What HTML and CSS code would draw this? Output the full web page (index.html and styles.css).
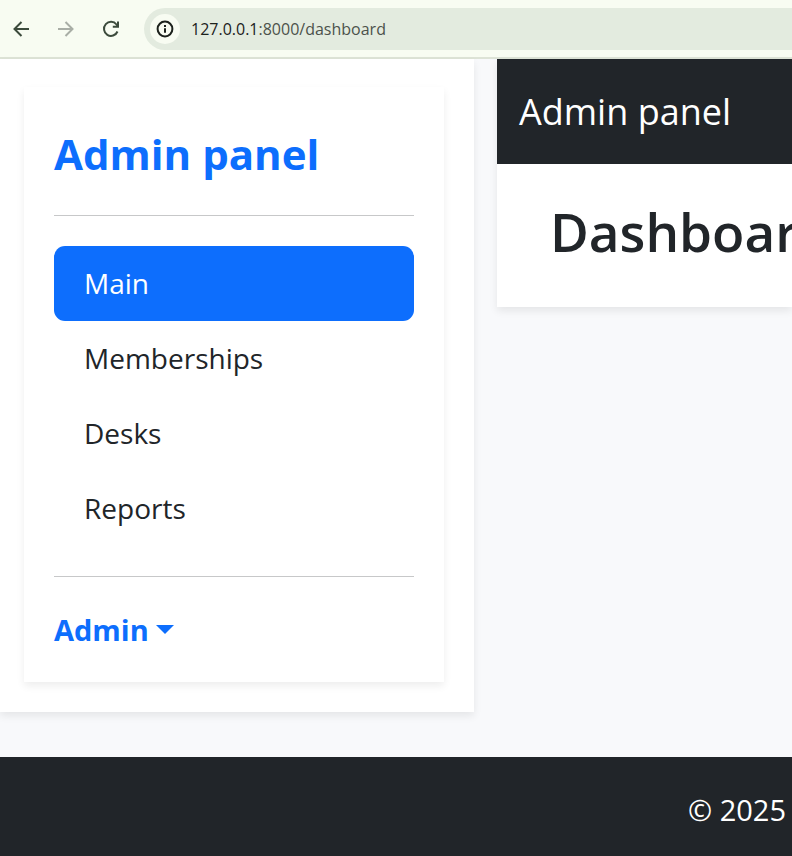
FILE: index.html
```html
<!DOCTYPE html>
<html lang="en">
<head>
<meta charset="utf-8">
<meta name="viewport" content="width=device-width, initial-scale=1">
<title>Admin panel</title>
<link rel="stylesheet" href="styles.css">
</head>
<body>
<div class="toolbar">
  <button class="tool" type="button" aria-label="Back"><svg viewBox="0 0 24 24" width="24" height="24"><path d="M20 12H5.500M12.500 5l-7 7 7 7"/></svg></button>
  <button class="tool tool-off" type="button" aria-label="Forward" disabled><svg viewBox="0 0 24 24" width="24" height="24"><path d="M4 12h14.500M11.500 5l7 7-7 7"/></svg></button>
  <button class="tool" type="button" aria-label="Reload"><svg viewBox="0 0 24 24" width="24" height="24"><path d="M18.500 14.500A7 7 0 1 1 17.500 7.500L18.800 9"/><path d="M19 4.500V9.700H13.800"/></svg></button>
  <div class="address">
    <button class="info" type="button" aria-label="Site information"><svg viewBox="0 0 18 18" width="18" height="18"><circle cx="9" cy="9" r="7.400"/><path d="M9 8.200v4.600M9 5v2"/></svg></button>
    <span class="url"><span class="host">127.0.0.1</span>:8000/dashboard</span>
  </div>
</div>
<div class="layout">
  <aside class="sidebar">
    <div class="card">
      <h2 class="brand">Admin panel</h2>
      <hr class="rule">
      <nav class="nav">
        <a class="link active" href="#" aria-current="page">Main</a>
        <a class="link" href="#">Memberships</a>
        <a class="link" href="#">Desks</a>
        <a class="link" href="#">Reports</a>
      </nav>
      <hr class="rule">
      <button class="account" type="button" aria-haspopup="true">Admin<span class="caret"></span></button>
    </div>
  </aside>
  <main class="content">
    <div class="navbar"><a class="navbar-brand" href="#">Admin panel</a></div>
    <section class="panel"><h1 class="title">Dashboard</h1></section>
  </main>
</div>
<footer class="footer">© 2025</footer>
</body>
</html>
```
FILE: styles.css
```css
* { box-sizing: border-box; }

body {
  margin: 0;
  min-height: 100vh;
  display: flex;
  flex-direction: column;
  overflow-x: hidden;
  background: #f8f9fb;
  color: #212529;
  font-family: "Open Sans", "Noto Sans", sans-serif;
  font-size: 29px;
  line-height: 45px;
}

button {
  padding: 0;
  border: 0;
  background: none;
  color: inherit;
  font: inherit;
}

.toolbar {
  display: flex;
  align-items: center;
  gap: 21px;
  height: 59px;
  padding-left: 9px;
  background: #f8fcf2;
  border-bottom: 2px solid #dde3d6;
}

.tool {
  display: flex;
  color: #3c4b3c;
}

.tool-off { color: #a9aea6; }

.tool svg,
.info svg {
  fill: none;
  stroke: currentColor;
  stroke-width: 2;
}

.address {
  flex: 1;
  display: flex;
  align-items: center;
  gap: 11px;
  height: 42px;
  padding-left: 6px;
  border-radius: 21px 0 0 21px;
  background: #e3ebdf;
}

.info {
  display: flex;
  align-items: center;
  justify-content: center;
  width: 30px;
  height: 30px;
  border-radius: 50%;
  background: #f8fcf2;
  color: #1c211c;
}

.url {
  color: #4c524b;
  font-size: 16px;
  line-height: 24px;
}

.host { color: #1c211c; }

.layout {
  display: flex;
  align-items: flex-start;
  gap: 23px;
  padding-bottom: 45px;
}

.sidebar {
  flex: 0 0 474px;
  padding: 28px 30px 30px 24px;
  background: #fff;
  box-shadow: 0 4px 8px rgba(0, 0, 0, 0.08);
}

.card {
  padding: 38px 30px 30px;
  background: #fff;
  box-shadow: 0 4px 8px rgba(0, 0, 0, 0.07);
}

.brand {
  margin: 0 0 32px;
  color: #0d6efd;
  font-size: 42px;
  font-weight: 700;
  line-height: 58px;
}

.rule {
  margin: 30px 0;
  border: 0;
  border-top: 1px solid #c7c8c9;
}

.nav {
  display: flex;
  flex-direction: column;
}

.link {
  padding: 15px 30px;
  border-radius: 11px;
  color: inherit;
  font-size: 28px;
  text-decoration: none;
}

.active {
  background: #0d6efd;
  color: #fff;
}

.account {
  display: flex;
  align-items: center;
  gap: 7px;
  color: #0d6efd;
  font-weight: 700;
}

.caret {
  border: 9px solid transparent;
  border-top-color: currentColor;
  border-bottom: 0;
}

.content {
  flex: 1;
  min-width: 0;
  box-shadow: 0 4px 8px rgba(0, 0, 0, 0.08);
}

.navbar {
  padding: 24px 22px;
  background: #212529;
}

.navbar-brand {
  display: block;
  color: #fff;
  font-size: 36px;
  line-height: 57px;
  text-decoration: none;
}

.panel {
  padding: 35px 0 42px 53px;
  overflow: hidden;
  background: #fff;
}

.title {
  margin: 0;
  font-size: 53px;
  font-weight: 600;
  line-height: 66px;
  white-space: nowrap;
}

.footer {
  flex: 1;
  padding: 30px 6px 24px;
  background: #212529;
  color: #fff;
  text-align: right;
}
```
